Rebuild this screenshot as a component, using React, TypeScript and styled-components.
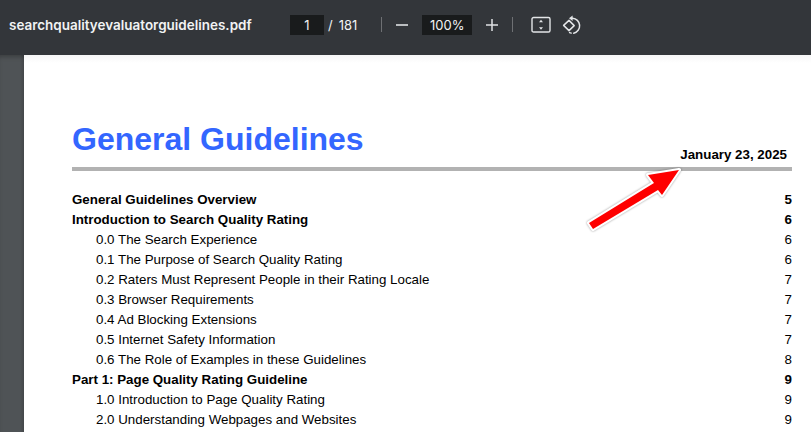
import React from 'react';
import styled, { createGlobalStyle } from 'styled-components';

const GlobalStyle = createGlobalStyle`
  html, body {
    margin: 0;
    padding: 0;
    height: 100%;
    overflow: hidden;
    background: #4f5356;
  }
`;

type Entry = { label: string; page: number; sub?: boolean };

const entries: Entry[] = [
  { label: 'General Guidelines Overview', page: 5 },
  { label: 'Introduction to Search Quality Rating', page: 6 },
  { label: '0.0 The Search Experience', page: 6, sub: true },
  { label: '0.1 The Purpose of Search Quality Rating', page: 6, sub: true },
  { label: '0.2 Raters Must Represent People in their Rating Locale', page: 7, sub: true },
  { label: '0.3 Browser Requirements', page: 7, sub: true },
  { label: '0.4 Ad Blocking Extensions', page: 7, sub: true },
  { label: '0.5 Internet Safety Information', page: 7, sub: true },
  { label: '0.6 The Role of Examples in these Guidelines', page: 8, sub: true },
  { label: 'Part 1: Page Quality Rating Guideline', page: 9 },
  { label: '1.0 Introduction to Page Quality Rating', page: 9, sub: true },
  { label: '2.0 Understanding Webpages and Websites', page: 9, sub: true },
];

const App = () => {
  return (
    <Viewer>
      <GlobalStyle />
      <Toolbar>
        <FileName>searchqualityevaluatorguidelines.pdf</FileName>
        <PageControls>
          <ValueBox $width={34}>1</ValueBox>
          <PageCount>
            <span>/</span>
            <span>181</span>
          </PageCount>
        </PageControls>
        <Divider $left={24} />
        <IconButton $left={13} aria-label="Zoom out">
          <svg width="14" height="14" viewBox="0 0 14 14">
            <path d="M1 7h12" stroke="#dfe1e3" strokeWidth="1.6" />
          </svg>
        </IconButton>
        <ValueBox $width={50} $left={13}>100%</ValueBox>
        <IconButton $left={13} aria-label="Zoom in">
          <svg width="14" height="14" viewBox="0 0 14 14">
            <path d="M1 7h12M7 1v12" stroke="#dfe1e3" strokeWidth="1.5" />
          </svg>
        </IconButton>
        <Divider $left={13} />
        <IconButton $left={18} aria-label="Fit to page">
          <svg width="20" height="18" viewBox="0 0 20 18" fill="none">
            <rect x="1" y="1.5" width="18" height="14.5" rx="1.6" stroke="#e3e5e7" strokeWidth="1.4" />
            <path d="M10 3.8 12 6.3H8zM10 13.8 12 11.3H8z" fill="#e3e5e7" />
          </svg>
        </IconButton>
        <IconButton $left={11} aria-label="Rotate">
          <svg width="20" height="20" viewBox="0 0 20 20" fill="none">
            <path d="M1.6 10.4 7 5.4l5.2 5.2L7 15.6z" stroke="#e3e5e7" strokeWidth="1.5" strokeLinejoin="round" />
            <path d="M9.5 3.2h1a7.6 7.6 0 0 1 1.2 15M7.6 17.6l1.6.5" stroke="#e3e5e7" strokeWidth="1.5" strokeLinecap="round" />
            <path d="M10.6.4 7 3.2 10.6 6z" fill="#e3e5e7" />
          </svg>
        </IconButton>
      </Toolbar>
      <Canvas>
        <Sheet>
          <TitleRow>
            <Title>General Guidelines</Title>
            <DateLabel>January 23, 2025</DateLabel>
          </TitleRow>
          <Contents>
            {entries.map((entry) => (
              <Row key={entry.label} $sub={entry.sub}>
                <span>{entry.label}</span>
                <span>{entry.page}</span>
              </Row>
            ))}
          </Contents>
          <Arrow width="110" height="76" viewBox="0 0 110 76" aria-hidden="true">
            <path
              d="M96 3 65 8 71 16 6 56 10 62 75 23 79 28z"
              fill="#fe0000"
              stroke="#ffffff"
              strokeWidth="4"
              strokeLinejoin="round"
              paintOrder="stroke"
            />
          </Arrow>
        </Sheet>
      </Canvas>
    </Viewer>
  );
};

export default App;

const Viewer = styled.div`
  display: flex;
  flex-direction: column;
  width: 811px;
  height: 432px;
  overflow: hidden;
  font-family: 'Liberation Sans', Arial, sans-serif;
`;

const Toolbar = styled.header`
  display: flex;
  align-items: center;
  flex: 0 0 55px;
  height: 55px;
  padding: 0 0 6px 9px;
  box-sizing: border-box;
  background: #33363a;
  color: #f1f3f4;
  font-family: Inter, Roboto, 'Liberation Sans', sans-serif;
`;

const FileName = styled.div`
  width: 281px;
  font-size: 13.48px;
  font-weight: 600;
  white-space: nowrap;
`;

const PageControls = styled.div`
  display: flex;
  align-items: center;
`;

const ValueBox = styled.div<{ $width: number; $left?: number }>`
  display: flex;
  align-items: center;
  justify-content: center;
  width: ${(props) => props.$width}px;
  height: 20px;
  margin-left: ${(props) => props.$left ?? 0}px;
  background: #191b1c;
  font-size: 13px;
`;

const PageCount = styled.div`
  display: flex;
  gap: 6px;
  margin-left: 4px;
  font-size: 13px;
`;

const Divider = styled.div<{ $left: number }>`
  width: 1px;
  height: 15px;
  margin-left: ${(props) => props.$left}px;
  background: #6e7073;
`;

const IconButton = styled.button<{ $left: number }>`
  display: flex;
  align-items: center;
  justify-content: center;
  margin-left: ${(props) => props.$left}px;
  padding: 0;
  border: 0;
  background: none;
`;

const Canvas = styled.main`
  flex: 1;
  min-height: 0;
  padding-left: 24px;
  background: linear-gradient(90deg, #4f5356 0, #4f5356 20px, #44474a 24px);
  box-shadow: inset 0 4px 4px -2px rgba(0, 0, 0, 0.25);
`;

const Sheet = styled.section`
  position: relative;
  height: 100%;
  padding: 68px 19px 0 48px;
  box-sizing: border-box;
  overflow: hidden;
  background: linear-gradient(#f6f6f6, #ffffff 8px);
  color: #000000;
`;

const TitleRow = styled.div`
  display: flex;
  justify-content: space-between;
  align-items: flex-end;
  padding: 0 5px 0 0;
  height: 44px;
  border-bottom: 4px solid #b2b2b2;
`;

const Title = styled.h1`
  margin: 0;
  font-size: 32px;
  line-height: 37px;
  font-weight: 700;
  color: #3366ff;
  position: relative;
  top: -9px;
`;

const DateLabel = styled.div`
  font-size: 13.33px;
  font-weight: 700;
  line-height: 15px;
  margin-bottom: 5px;
`;

const Contents = styled.div`
  margin-top: 19px;
`;

const Row = styled.div<{ $sub?: boolean }>`
  display: flex;
  justify-content: space-between;
  height: 20px;
  padding-left: ${(props) => (props.$sub ? '24px' : '0')};
  font-size: 13.33px;
  line-height: 20px;
  font-weight: ${(props) => (props.$sub ? 400 : 700)};
`;

const Arrow = styled.svg`
  position: absolute;
  left: 559px;
  top: 112px;
  filter: drop-shadow(0 0 1px rgba(0, 0, 0, 0.4));
`;
